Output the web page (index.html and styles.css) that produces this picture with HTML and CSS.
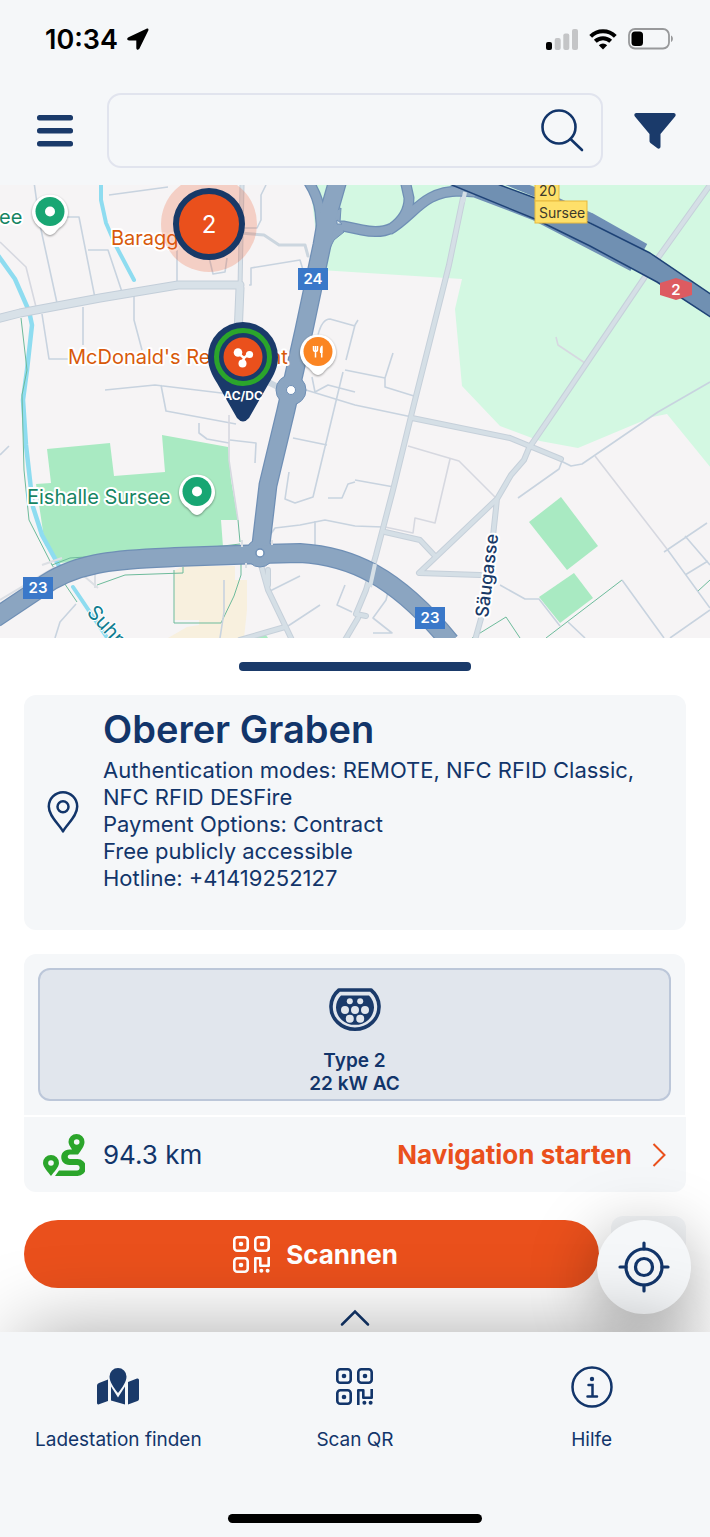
FILE: index.html
```html
<!DOCTYPE html>
<html lang="de">
<head>
<meta charset="utf-8">
<meta name="viewport" content="width=device-width, initial-scale=1">
<title>Ladestation finden</title>
<link rel="stylesheet" href="styles.css">
</head>
<body>
<svg class="defs" width="0" height="0" aria-hidden="true">
  <symbol id="qr" viewBox="0 0 37 37">
    <g fill="none" stroke="currentColor" stroke-width="2.6">
      <rect x="1.3" y="1.3" width="13.4" height="13.4" rx="3"/>
      <rect x="22.3" y="1.3" width="13.4" height="13.4" rx="3"/>
      <rect x="1.3" y="22.3" width="13.4" height="13.4" rx="3"/>
      <path d="M22.3 37V22.3h5v7.4h8.4v-8.7" stroke-linejoin="round"/>
    </g>
    <g fill="currentColor">
      <circle cx="8" cy="8" r="2.3"/><circle cx="29" cy="8" r="2.3"/><circle cx="8" cy="29" r="2.3"/>
      <circle cx="28.4" cy="34.8" r="2"/><circle cx="34.6" cy="34.8" r="2"/>
    </g>
  </symbol>
</svg>

<div class="app">
  <header class="top">
    <div class="status">
      <div class="status-left">
        <span class="time">10:34</span>
        <svg width="22" height="22" viewBox="0 0 22 22"><path d="M19.500.8 1.500 9.300c-2 1-1.600 3.200.6 3.200h7.200v7.200c0 2.400 2.300 2.800 3.300.6L21.300 2.600c.6-1.400-.4-2.400-1.800-1.800z" fill="#000"/></svg>
      </div>
      <div class="status-right">
        <svg width="32" height="21" viewBox="0 0 32 21"><rect y="13" width="6" height="8" rx="2" fill="#000"/><g fill="#c4c5c7"><rect x="8.700" y="9" width="6" height="12" rx="2"/><rect x="17.300" y="4.500" width="6" height="16.500" rx="2"/><rect x="26" width="6" height="21" rx="2"/></g></svg>
        <svg width="28" height="21" viewBox="0 0 28 21"><g fill="none" stroke="#000" stroke-width="4"><path d="M1.700 7.400a17.500 17.500 0 0 1 24.600 0"/><path d="M6.300 12.300a11 11 0 0 1 15.400 0"/></g><path d="M14 20.500l-4.200-4.300a6 6 0 0 1 8.400 0z" fill="#000"/></svg>
        <svg width="46" height="22" viewBox="0 0 46 22"><rect x="1" y="1" width="40" height="19.500" rx="6" fill="none" stroke="#98999b" stroke-width="1.800"/><rect x="3.500" y="3.500" width="11.500" height="14.500" rx="3.500" fill="#000"/><path d="M43 7.500c2.500 1 2.500 5.500 0 6.500z" fill="#98999b"/></svg>
      </div>
    </div>
    <div class="bar">
      <button class="icon-btn" aria-label="Menü">
        <svg width="36" height="32" viewBox="0 0 36 32" fill="#1a3a6a"><rect y="0" width="36" height="5.500" rx="2.500"/><rect y="13" width="36" height="5.500" rx="2.500"/><rect y="26" width="36" height="5.500" rx="2.500"/></svg>
      </button>
      <form class="search" role="search">
        <input type="search" aria-label="Suche">
        <button class="icon-btn" type="button" aria-label="Suchen">
          <svg width="43" height="43" viewBox="0 0 43 43" fill="none" stroke="#12356a" stroke-width="2.600" stroke-linecap="round"><circle cx="18" cy="18" r="16.500"/><path d="M29.500 30 41 41"/></svg>
        </button>
      </form>
      <button class="icon-btn" aria-label="Filter">
        <svg width="42" height="38" viewBox="0 0 42 38"><path d="M2.500 1h37c2 0 2.800 2 1.600 3.600L26.500 22v12.500c0 2-1.800 2.800-3.400 1.600l-6-4.600c-1-.7-1.600-1.500-1.600-2.800V22L.9 4.600C-.3 3 .5 1 2.500 1z" fill="#1a3a6a"/></svg>
      </button>
    </div>
  </header>

  <svg class="map" viewBox="0 185 710 453" role="img" aria-label="Karte von Sursee">
    <rect x="0" y="185" width="710" height="453" fill="#f6f4f5"/>
    <path d="M308 180H715V472L711 468 667 414 652 417 578 448 540 441 500 426 462 386 455 309 462 279 320 270 312 200Z" fill="#d3f8e2"/>
    <g fill="#a9eac2">
      <path d="M47 449 110 443 114 476 165 472 162 435 228 447 231 480 238 520H221L223 547 60 563 45 545 36 484 51 483Z"/>
      <path d="M529 522 561 497 598 546 567 570Z"/>
      <path d="M539 597 574 573 593 598 560 623Z"/>
      <path d="M255 638l5-3h6l2 3z"/>
    </g>
    <path d="M183 566H235V580H247V610L244 638H168L187 627 199 625V620H174V571Z" fill="#f8f0de"/>

    <g fill="none" stroke="#8edcf0" stroke-linecap="round">
      <path d="M101 180V200L106 223 116 246 134 280" stroke-width="4"/>
      <path d="M-3 254 15 279 29 311 32 325 27 370 23 400 26 445 33 507 42 535 59 566" stroke-width="4.500"/>
      <path d="M73 587 110 642" stroke-width="4"/>
    </g>
    <g fill="none" stroke="#6dbb9b" stroke-width="1">
      <path d="M21 318 27 370 22 395 24 470 29 520 52 565 77 602"/>
      <path d="M52 565 70 558 130 554 223 546 240 544M238 520l2 22M97 585 125 575 183 573V567M174 570V623H221L234 596 241 575V564"/>
      <path d="M472 638 506 617 520 638M546 638 622 580M698 591l12-11"/>
    </g>

    <g fill="none" stroke="#c8d3df" stroke-width="1.600" stroke-linejoin="round">
      <path d="M34 182 40 225 57 303M67 217H79L95 298M88 250H108L122 292M109 195 168 187M177 250V281M209 257 213 274 225 272 227 258M243 228H257L261 220V195L266 185"/>
      <path d="M42 314 49 359H85M83 307V345M134 295V320L142 350M105 390 155 385 238 395M161 385l5 26 70 13M199 423v10l8 6 22 4M249 285H251V268L300 260 306 280M293 438 327 445M289 472l-4 27 10 4 18-6 30-125M328 498h14l6-14 7-2"/>
      <path d="M306 390 355 405 412 417M312 377 315 392 328 385 355 392M318 335Q322 319 330 319L355 326M346 360 355 325 358 320M345 370 385 378 393 353M385 378v9l29 9M355 480 394 487M355 526 383 527M268 538l7-10 25-3 25-5 30 6M315 521v24M270 591 300 576M285 628 320 605M345 585 337 605 352 612"/>
      <path d="M562 461 559 469 518 498M500 585 525 599H539L560 626M568 622 585 638M622 580 664 638M667 549 710 608M670 638 710 610M561 461 571 466 582 464 658 412 710 382M664 552 707 523M685 536 710 565M685 575 708 561M224 580V612L220 638M230 440 256 443 255 463M55 638 60 622 76 604M0 455l9-9M373 633 392 633 373 618 386 600 388 592"/>
      <path d="M0 242 26 267 36 307M229 415V460L238 520M408 446 459 461 495 497M450 459 435 523 415 518 413 533 385 527M556 337 558 345 585 363M595 456 667 549" stroke="#d6d8e0"/>
    </g>

    <g fill="none" stroke-linejoin="round" stroke-linecap="round">
      <g>
        <path d="M242 185 240 288" stroke="#c3ced9" stroke-width="5"/>
        <path d="M-3 319 20 313 100 298 178 285H240M240 288 238 335" stroke="#c3ced9" stroke-width="9"/>
        <path d="M-3 319 20 313 100 298 178 285H240M240 288 238 335" stroke="#d8e1e8" stroke-width="7"/>
        <path d="M242 185 240 288" stroke="#d8e1e8" stroke-width="3"/>
        <path d="M240 233 264 235 279 245H305L308 256" stroke="#ccd6df" stroke-width="3"/>
        <path d="M268 382 280 388" stroke="#ccd6df" stroke-width="6"/>
      </g>
      <g stroke="#c6d0da" stroke-width="6">
        <path d="M464 193 449 265 414 404 393 490 376 555 366 590 356 614 366 616M710 185 655 262 555 410 529 448M412 418 510 438 561 459M529 448 524 460 511 475 497 499 493 536 482 615 475 640M497 499 419 573 480 575M385 532 420 540 435 556M261 565 268 590 292 640M268 570V585M240 640 285 627M345 640 358 618"/>
      </g>
      <g stroke="#d5dfe6" stroke-width="4">
        <path d="M464 193 449 265 414 404 393 490 376 555 366 590 356 614 366 616M710 185 655 262 555 410 529 448M412 418 510 438 561 459M529 448 524 460 511 475 497 499 493 536 482 615 475 640M497 499 419 573 480 575M385 532 420 540 435 556M261 565 268 590 292 640M268 570V585M240 640 285 627M345 640 358 618"/>
      </g>
    </g>
    <path d="M0 600 55 567M42 565 62 558M84 576 98 588M95 574v14" stroke="#dcdfe4" stroke-width="2" fill="none"/>

    <g fill="none" stroke-linejoin="round">
      <g stroke="#6f8fb5">
        <path d="M306 178Q318 195 320 212L322 235M322 226 343 226 362 230Q380 234 392 228 409 216 409 198L405 180M389 230C415 215 422 191 460 191L475 192 535 215 633 266" stroke-width="11"/>
        <path d="M505 180 535 192 590 217 645 248" stroke-width="9"/>
        <path d="M338 180 326 222 322 245 304 330 286 410 268 485 260 553" stroke-width="19"/>
        <path d="M329 250 334 240 344 232 340 222 341 208 328 215Z" fill="#8ba5c1"/>
        <path d="M-5 618 40 588C80 558 130 560 175 557L260 554 300 553C350 556 395 575 450 642" stroke-width="20"/>
      </g>
      <circle cx="291" cy="390" r="15" fill="#8ba5c1" stroke="#6f8fb5"/>
      <circle cx="260" cy="553" r="14" fill="#8ba5c1" stroke="#6f8fb5"/>
      <g stroke="#8ba5c1">
        <path d="M306 178Q318 195 320 212L322 235M322 226 343 226 362 230Q380 234 392 228 409 216 409 198L405 180M389 230C415 215 422 191 460 191L475 192" stroke-width="8.500"/>
        <path d="M338 180 326 222 322 245 304 330 286 410 268 485 260 553" stroke-width="16.500"/>
        <path d="M-5 618 40 588C80 558 130 560 175 557L260 554 300 553C350 556 395 575 450 642" stroke-width="17.500"/>
      </g>
      <path d="M337 220v4h5z" fill="#e9f3f2" stroke="#6f8fb5"/>
      <path d="M440 180 452 185 535 219 590 246 657 282 712 318V295L650 253 588 222 535 198 500 185 488 180Z" fill="#7090b2"/>
      <path d="M440 180 452 185 535 219 590 246 657 282 712 318M712 295 650 253 588 222 535 198 500 185 488 180" stroke="#1f4377" stroke-width="1.500"/>
    </g>
    <path d="M375 564 370 587M465 192l-2 10" stroke="#d5dfe6" stroke-width="4"/>
    <circle cx="291" cy="390" r="4.500" fill="#fff" stroke="#6f8fb5"/>
    <circle cx="260" cy="553" r="4" fill="#fff" stroke="#6f8fb5" stroke-width="1.500"/>
    <path d="M242 540v7M246 563v5M272 540v5" stroke="#dcdfe4" stroke-width="2" fill="none"/>

    <g class="shield">
      <rect x="298" y="268" width="30" height="22" fill="#3a78c9"/><text x="313" y="284">24</text>
      <rect x="23" y="577" width="30" height="22" fill="#3a78c9"/><text x="38" y="593">23</text>
      <rect x="415" y="607" width="30" height="22" fill="#3a78c9"/><text x="430" y="623">23</text>
      <path d="M660 283 676 278 692 283V295L676 300 660 295Z" fill="#dd5b61"/><text x="676" y="295">2</text>
    </g>
    <g class="exit">
      <rect x="535" y="180" width="24" height="21"/><rect x="535" y="201" width="52" height="22"/>
      <text x="539" y="196">20</text><text x="539" y="218">Sursee</text>
    </g>

    <g class="place">
      <text x="-1" y="224" fill="#168563">ee</text>
      <text x="111" y="245" fill="#d85a0b">Baragge</text>
      <text x="68" y="364" fill="#d85a0b">McDonald's Restaurant</text>
      <text x="27" y="504" fill="#168563">Eishalle Sursee</text>
      <text class="water" transform="translate(86 613) rotate(48)">Suhre</text>
      <text class="street" transform="translate(488 618) rotate(-83)">Säugasse</text>
    </g>

    <g class="pins">
      <g>
        <path d="M50 235c-4 0-6-4-9-7a18 18 0 1 1 18 0c-3 3-5 7-9 7z" fill="#fff"/><circle cx="50" cy="211.500" r="14.500" fill="#18a673"/><circle cx="50" cy="211.500" r="5" fill="#fff"/>
      </g>
      <g>
        <path d="M197 515c-4 0-6-4-9-7a18 18 0 1 1 18 0c-3 3-5 7-9 7z" fill="#fff"/><circle cx="197" cy="491.500" r="14.500" fill="#18a673"/><circle cx="197" cy="491.500" r="5" fill="#fff"/>
      </g>
      <g>
        <path d="M318 375c-4 0-6-4-9-7a18 18 0 1 1 18 0c-3 3-5 7-9 7z" fill="#fff"/><circle cx="318" cy="351.500" r="14.500" fill="#fb8522"/>
        <path d="M313.500 346v3.500q0 2 2 2t2-2V346M315.500 346v11.500M321.700 346.500v11" stroke="#fff" stroke-width="1.500" fill="none"/><path d="M322.500 345.500v7.500h-2.500c-.5-3 0-7 2.500-7.500z" fill="#fff"/>
      </g>
    </g>

    <circle cx="209" cy="224" r="48" fill="#ed4f1d" fill-opacity=".22"/>
    <circle cx="209" cy="224" r="33" fill="#ea501c" stroke="#183967" stroke-width="6"/>
    <text class="cluster" x="209" y="233">2</text>

    <path d="M243 322a35 35 0 0 1 35 35c0 10-4 18-9 26l-20 35q-6 7-12 0l-20-35c-5-8-9-16-9-26a35 35 0 0 1 35-35z" fill="#1a3a6a"/>
    <circle cx="243" cy="357" r="26.500" fill="none" stroke="#2ba52b" stroke-width="5"/>
    <circle cx="243" cy="357" r="19.500" fill="#ea501c"/>
    <path d="M238 353 244 358 249 354M244 358 242 364" stroke="#fff" stroke-width="2.500" fill="none"/>
    <g fill="#fff"><circle cx="238" cy="352.500" r="4.300"/><circle cx="249.500" cy="354.500" r="3.600"/><circle cx="242.500" cy="363.500" r="4"/></g>
    <text class="acdc" x="243" y="400">AC/DC</text>
  </svg>

  <main class="sheet">
    <div class="handle"></div>
    <section class="card station">
      <svg class="station-icon" width="32" height="43" viewBox="0 0 32 43" fill="none" stroke="#12356a" stroke-width="2.500" stroke-linejoin="round"><path d="M16 40.500C12 33 1.800 25.500 1.800 15.500a14.200 14.200 0 0 1 28.400 0C30.200 25.500 20 33 16 40.500z"/><circle cx="16" cy="15.800" r="5.500"/></svg>
      <div class="station-text">
        <h1>Oberer Graben</h1>
        <p>Authentication modes: REMOTE, NFC RFID Classic, NFC RFID DESFire</p>
        <p>Payment Options: Contract</p>
        <p>Free publicly accessible</p>
        <p>Hotline: +41419252127</p>
      </div>
    </section>

    <section class="charge">
      <div class="plugs">
        <button class="plug">
          <svg width="52" height="46" viewBox="0 0 52 46"><path d="M10 2h32a24 22.500 0 1 1-32 0z" fill="none" stroke="#1a3a6a" stroke-width="3.600" stroke-linejoin="round"/><path d="M12 7.500h28a19 17.500 0 1 1-28 0z" fill="#1a3a6a"/><g fill="#e1e6ed"><circle cx="20.800" cy="13.300" r="3"/><circle cx="31.200" cy="13.300" r="3"/><circle cx="16" cy="22" r="4"/><circle cx="26" cy="22" r="4"/><circle cx="36" cy="22" r="4"/><circle cx="20.800" cy="30.700" r="4"/><circle cx="31.200" cy="30.700" r="4"/></g></svg>
          <span>Type 2<br>22 kW AC</span>
        </button>
      </div>
      <div class="route">
        <svg width="42" height="42" viewBox="0 0 42 42"><path d="M33.500 0a8 8 0 0 1 8 8c0 4-3.500 8.500-6.500 12.500h-8c-3 0-3 4.500 0 4.500h7.500a8.500 8.500 0 0 1 0 17H12l4-5.500h18c3.500 0 3.500-5.500 0-5.500h-7.500c-11 0-11-15.500 0-15.500h2.500c-2-3-3.500-5.500-3.500-7.500a8 8 0 0 1 8-8z" fill="#2ba52b"/><circle cx="33.700" cy="8" r="2.800" fill="#f5f7f9"/><path d="M8 21a8 8 0 0 1 8 8c0 4-5 9-8 13-3-4-8-9-8-13a8 8 0 0 1 8-8z" fill="#2ba52b"/><circle cx="8" cy="29" r="2.800" fill="#f5f7f9"/></svg>
        <span class="distance">94.3 km</span>
        <a class="navigate" href="#navigation">Navigation starten
          <svg width="14" height="24" viewBox="0 0 14 24" fill="none" stroke="#ea501c" stroke-width="2"><path d="M1.500 1 12.500 12 1.500 23"/></svg>
        </a>
      </div>
    </section>

    <div class="actions">
      <button class="scan"><svg width="37" height="37"><use href="#qr"/></svg>Scannen</button>
      <div class="tile"></div>
    </div>
    <button class="more" aria-label="Mehr anzeigen"><svg width="30" height="18" viewBox="0 0 30 18" fill="none" stroke="#12356a" stroke-width="2.500" stroke-linecap="round"><path d="M2 15.500 15 2.500 28 15.500"/></svg></button>
    <button class="locate" aria-label="Mein Standort"><svg width="52" height="52" viewBox="0 0 52 52" fill="none" stroke="#12356a" stroke-width="3.200" stroke-linecap="round"><circle cx="26" cy="26" r="18"/><circle cx="26" cy="26" r="8.500"/><path d="M26 2v6M26 44v6M2 26h6M44 26h6"/></svg></button>
  </main>

  <nav class="tabs">
    <a href="#map"><svg width="42" height="42" viewBox="0 0 42 42" fill="#1a3a6a"><path d="M2 17 11 13.500V35L2 38.300Q0 39 0 37V19.500Q0 17.600 2 17zM31 16 40 12.500Q42 12 42 14V33Q42 34.500 40.500 35L31 38.500zM14 20.500 21 31.500 28 20.500V38.500L14 34.500z"/><path d="M21 2a8.500 8.500 0 0 1 8.500 8.500c0 5-4 11-8.500 16.500-4.500-5.500-8.500-11.500-8.500-16.500A8.500 8.500 0 0 1 21 2z"/></svg><span>Ladestation finden</span></a>
    <a href="#scan"><svg width="42" height="42" viewBox="-2 -2 42 42"><use href="#qr" width="37" height="37"/></svg><span>Scan QR</span></a>
    <a href="#help"><svg width="42" height="42" viewBox="0 0 42 42" fill="none" stroke="#12356a" stroke-width="2.500"><circle cx="21" cy="21" r="19.500"/><path d="M17.500 19H21.500V30.500M16.500 30.500H26" stroke-linecap="round"/><circle cx="21" cy="13" r="2.200" fill="#12356a" stroke="none"/></svg><span>Hilfe</span></a>
    <div class="home"></div>
  </nav>
</div>
</body>
</html>
```
FILE: styles.css
```css
* { box-sizing: border-box; }

body {
  margin: 0;
  background: #fff;
  color: #12356a;
  font-family: Inter, "Liberation Sans", sans-serif;
}

button {
  margin: 0;
  padding: 0;
  border: 0;
  background: none;
  color: inherit;
  font: inherit;
}

a { color: inherit; text-decoration: none; }
svg { display: block; flex: none; }
h1, p { margin: 0; }
.defs { position: absolute; }

.app { display: flex; flex-direction: column; min-height: 100vh; overflow: hidden; }

.top { background: #f5f7f9; }

.status {
  display: flex;
  justify-content: space-between;
  align-items: center;
  height: 78px;
  padding: 0 36px 0 45px;
}

.status-left, .status-right { display: flex; align-items: center; gap: 9px; }
.status-right { gap: 11px; }
.time { color: #000; font-size: 27px; font-weight: 600; }

.bar { display: flex; align-items: center; padding: 15px 34px 17px 37px; }

.search {
  flex: 1;
  display: flex;
  align-items: center;
  height: 75px;
  margin: 0 31px 0 34px;
  padding: 0 17px;
  border: 2px solid #e1e4ee;
  border-radius: 14px;
}

.search input {
  flex: 1;
  min-width: 0;
  height: 100%;
  border: 0;
  outline: 0;
  background: none;
  font: inherit;
  font-size: 22px;
}

.map { width: 100%; height: auto; }
.map text { font-family: Inter, "Liberation Sans", sans-serif; }
.shield text { font-size: 15px; font-weight: 600; fill: #fff; text-anchor: middle; }
.exit rect { fill: #fee06a; stroke: #e8b93d; stroke-width: 1; }
.exit text { font-size: 14px; fill: #3d3a2a; }
.place text { font-size: 20px; paint-order: stroke; stroke: #fff; stroke-width: 4px; stroke-linejoin: round; }
.place .water { fill: #0f7d91; stroke-width: 2px; }
.place .street { font-size: 18px; font-weight: 500; fill: #183967; }
.pins { filter: drop-shadow(0 1px 1px rgba(0, 0, 0, .4)); }
.cluster { font-size: 24px; fill: #fff; text-anchor: middle; }
.acdc { font-size: 12px; font-weight: 700; fill: #fff; text-anchor: middle; }

.sheet {
  position: relative;
  display: flex;
  flex-direction: column;
  padding: 24px 24px 0;
  background: #fff;
}

.handle { align-self: center; width: 232px; height: 9px; border-radius: 4px; background: #1a3a6a; }

.card { margin-top: 24px; border-radius: 12px; background: #f5f7f9; }
.station { display: flex; align-items: center; gap: 24px; padding: 0 20px 0 23px; }
.station-text { padding: 11px 0 38px; font-size: 22px; line-height: 27px; }
.station h1 { padding-bottom: 5px; font-size: 38px; font-weight: 600; line-height: 46px; }

.charge { display: flex; flex-direction: column; gap: 2px; margin-top: 24px; }
.plugs { margin-right: 1px; padding: 14px; border-radius: 12px 12px 0 0; background: #f5f7f9; }

.plug {
  display: flex;
  flex-direction: column;
  align-items: center;
  gap: 15px;
  width: 100%;
  padding: 18px 0 4px;
  border: 2px solid #bcc7d9;
  border-radius: 12px;
  background: #e1e6ed;
  font-size: 19px;
  font-weight: 600;
  line-height: 23px;
}

.route { display: flex; align-items: center; height: 75px; padding: 0 20px 0 19px; border-radius: 0 0 12px 12px; background: #f5f7f9; }
.distance { margin-left: 18px; font-size: 26px; }

.navigate {
  display: flex;
  align-items: center;
  gap: 20px;
  margin-left: auto;
  color: #ea501c;
  font-size: 26px;
  font-weight: 700;
}

.actions { display: flex; align-items: center; gap: 12px; margin-top: 24px; }

.scan {
  flex: 1;
  display: flex;
  justify-content: center;
  align-items: center;
  gap: 16px;
  height: 68px;
  padding-left: 8px;
  border-radius: 34px;
  background: #ea501c;
  color: #fff;
  font-size: 26px;
  font-weight: 700;
}

.tile { width: 75px; height: 76px; border-radius: 12px; background: #f5f7f9; }
.more { display: flex; justify-content: center; height: 40px; padding-top: 17px; }

.locate {
  position: absolute;
  right: 19px;
  bottom: 18px;
  display: grid;
  place-items: center;
  width: 94px;
  height: 94px;
  border-radius: 50%;
  background: #f5f7f9;
  box-shadow: 0 14px 66px rgba(0, 0, 0, .36);
}

.tabs {
  position: relative;
  flex: 1;
  display: grid;
  grid-template-columns: repeat(3, 1fr);
  align-content: start;
  min-height: 205px;
  padding: 34px 0 14px;
  background: #f5f7f9;
  box-shadow: 0 -20px 80px -20px rgba(0, 0, 0, .34);
}

.tabs a { display: flex; flex-direction: column; align-items: center; gap: 20px; font-size: 19px; line-height: 24px; }

.home {
  grid-column: 1 / -1;
  justify-self: center;
  width: 254px;
  height: 9px;
  margin-top: 62px;
  border-radius: 5px;
  background: #000;
}
```
